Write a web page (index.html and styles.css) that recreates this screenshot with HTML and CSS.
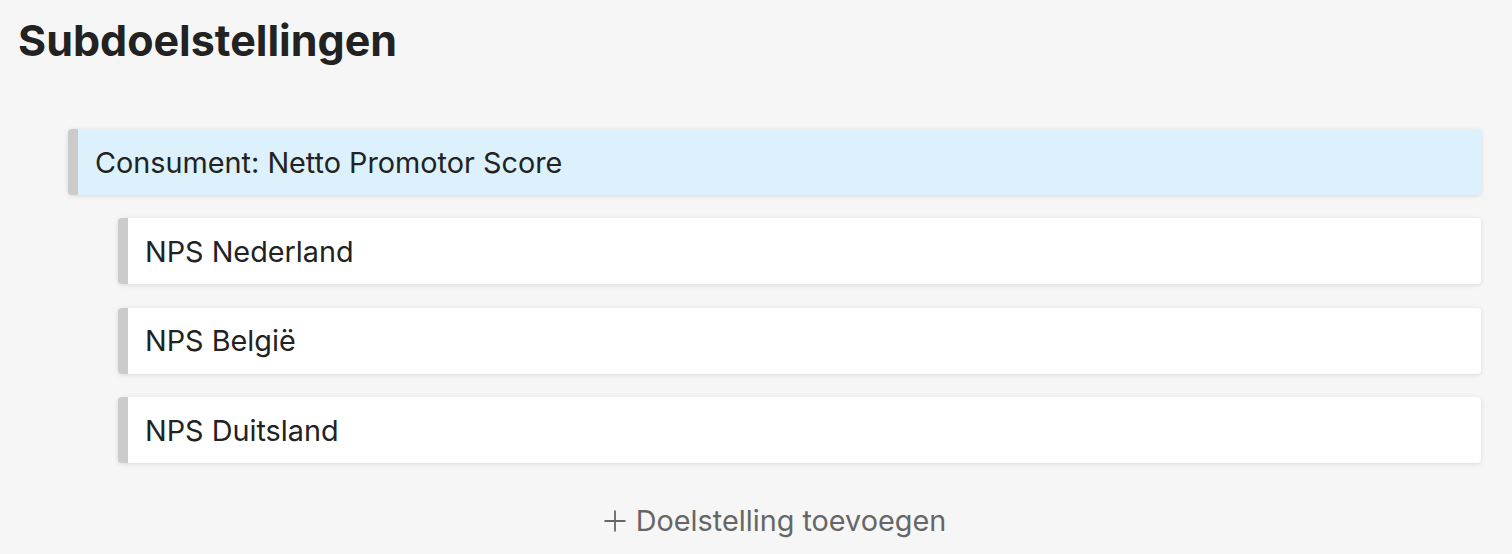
FILE: index.html
```html
<!DOCTYPE html>
<html lang="nl">
<head>
<meta charset="utf-8">
<link rel="stylesheet" href="styles.css">
</head>
<body>
<div class="page">
  <h1 class="title">Subdoelstellingen</h1>
  <div class="tree">
    <div class="card card-parent">Consument: Netto Promotor Score</div>
    <div class="children">
      <div class="card">NPS Nederland</div>
      <div class="card">NPS België</div>
      <div class="card">NPS Duitsland</div>
    </div>
    <button class="add" type="button"><svg class="plus" width="24" height="24" viewBox="0 0 24 24" aria-hidden="true"><path d="M12 1.5v21M1.5 12h21" stroke="#666" stroke-width="1.8" fill="none"/></svg>Doelstelling toevoegen</button>
  </div>
</div>
</body>
</html>
```
FILE: styles.css
```css
html, body {
  margin: 0;
  padding: 0;
  background: #f6f6f6;
  font-family: Inter, "Noto Sans", sans-serif;
  color: #222;
}
.page {
  padding: 14px 31px 0 18px;
}
.title {
  margin: 0;
  font-size: 43px;
  font-weight: 700;
  line-height: 52px;
  color: #222;
}
.tree {
  margin-top: 63px;
  margin-left: 50px;
  display: flex;
  flex-direction: column;
}
.children {
  margin-left: 50px;
  margin-top: 23px;
  display: flex;
  flex-direction: column;
  gap: 23.5px;
}
.card {
  height: 66px;
  box-sizing: border-box;
  display: flex;
  align-items: center;
  padding-left: 17px;
  background: #fff;
  border-left: 10px solid #cbcbcb;
  border-radius: 4px;
  box-shadow: 0 1px 5px rgba(0,0,0,0.12);
  font-size: 28.8px;
  color: #222;
}
.card-parent {
  background: #dcf1fc;
}
.add {
  align-self: center;
  margin-top: 40px;
  background: none;
  border: none;
  padding: 0;
  font-family: Inter, "Noto Sans", sans-serif;
  font-size: 28.8px;
  line-height: 36px;
  color: #666;
  display: flex;
  align-items: center;
  gap: 9px;
}
.plus {
  display: block;
}
```
